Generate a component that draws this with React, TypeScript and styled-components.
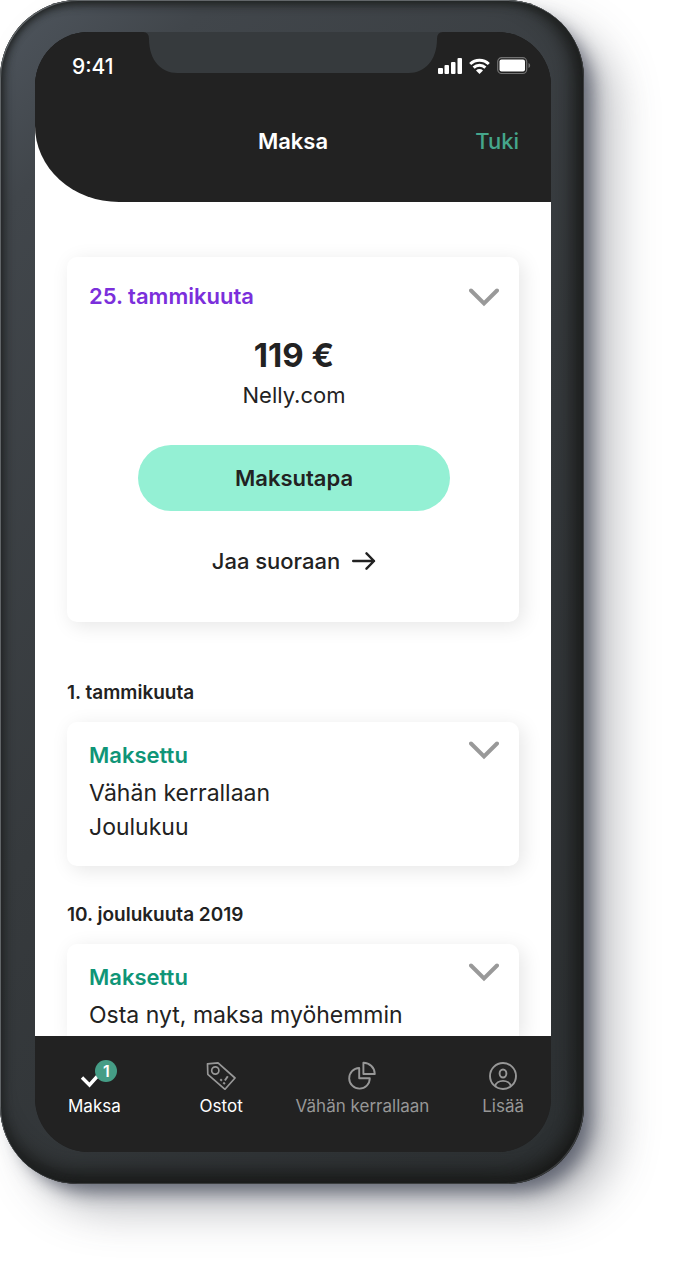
import React from "react";
import styled, { createGlobalStyle } from "styled-components";

const GlobalStyle = createGlobalStyle`
  *, *::before, *::after { box-sizing: border-box; }
  html { background: #fff; }
  body {
    margin: 0;
    background: #fff;
    color: #222;
    font-family: Inter, "Liberation Sans", sans-serif;
    font-size: 22px;
    -webkit-font-smoothing: antialiased;
  }
  h1, h2, p { margin: 0; }
  button { font: inherit; color: inherit; border: 0; background: none; padding: 0; cursor: pointer; }
`;

const Page = styled.div`
  padding: 0 96px 88px 0;
  overflow: hidden;
`;

const Phone = styled.div`
  padding: 32px 33px 32px 35px;
  border-radius: 78px;
  background: linear-gradient(135deg, #4f565e 0, #41464b 12%, #363a3d 50%, #2c3032 100%);
  box-shadow:
    inset 1px 1px 0 #626669,
    inset -1px -1px 0 #3a3c3e,
    inset 5px 0 8px -2px #212425,
    inset 0 6px 8px -2px #222524,
    inset -18px 0 20px -8px #1a1b1a,
    inset 0 -20px 20px -8px #1a1b1a,
    12px 12px 18px -4px rgba(68, 74, 90, 0.75),
    30px 26px 44px 0 rgba(68, 72, 82, 0.36);
`;

const Screen = styled.div`
  position: relative;
  overflow: hidden;
  border-radius: 54px;
  background: #222;
`;

const HeaderBackdrop = styled.div`
  background: linear-gradient(#222 50%, #fff 50%);
`;

const Header = styled.header`
  background: #222;
  border-bottom-left-radius: 84px 76px;
  color: #fff;
  padding: 20px 32px 0;
  height: 170px;
`;

const Notch = styled.svg`
  position: absolute;
  top: 0;
  left: 50%;
  margin-left: -150px;
  width: 300px;
  height: 41px;
`;

const StatusBar = styled.div`
  display: flex;
  align-items: center;
  justify-content: space-between;
  height: 28px;
  margin: 0 -12px 0 5px;
  font-size: 21px;
  font-weight: 500;
`;

const TitleBar = styled.div`
  display: grid;
  grid-template-columns: 1fr auto 1fr;
  align-items: center;
  margin-top: 47px;
  line-height: 28px;
`;

const Title = styled.h1`
  grid-column: 2;
  font-size: 22px;
  font-weight: 600;
`;

const SupportLink = styled.a`
  justify-self: end;
  color: #45a68c;
  font-weight: 500;
  text-decoration: none;
`;

const Main = styled.main`
  padding: 55px 32px 0;
  background: #fff;
`;

const Card = styled.section<{ $kind?: "open" | "cut" }>`
  padding: ${(p) => (p.$kind === "open" ? "24px 20px 22px 22px" : p.$kind === "cut" ? "18px 20px 4px 22px" : "18px 20px 22px 22px")};
  border-radius: ${(p) => (p.$kind === "cut" ? "10px 10px 0 0" : "10px")};
  background: #fff;
  box-shadow: 4px 4px 20px rgba(0, 0, 0, 0.1);
`;

const CardTop = styled.div`
  display: flex;
  justify-content: space-between;
  align-items: flex-start;
  line-height: 30px;
`;

const Status = styled.h2<{ $tone: "due" | "paid" }>`
  font-size: 22px;
  font-weight: 600;
  color: ${(p) => (p.$tone === "due" ? "#7b2fdb" : "#0f9577")};
`;

const Toggle = styled.button<{ $compact?: boolean }>`
  display: flex;
  height: ${(p) => (p.$compact ? "20px" : "32px")};
  align-items: center;
`;

const Summary = styled.div`
  display: flex;
  flex-direction: column;
  align-items: center;
  padding: 20px 0 21px;
`;

const Amount = styled.p`
  font-size: 33px;
  font-weight: 700;
  line-height: 44px;
`;

const Store = styled.p`
  line-height: 36px;
`;

const PayButton = styled.button`
  && {
    width: 76%;
    height: 66px;
    margin-top: 32px;
    border-radius: 33px;
    background: #94f0d4;
    font-weight: 600;
  }
`;

const ShareButton = styled.button`
  && {
    display: flex;
    align-items: center;
    gap: 12px;
    height: 36px;
    margin-top: 32px;
    font-weight: 500;
  }
`;

const DateHeading = styled.h2<{ $first?: boolean }>`
  margin: ${(p) => (p.$first ? "56px" : "34px")} 0 14px;
  font-size: 19px;
  font-weight: 600;
  line-height: 30px;
`;

const Detail = styled.p`
  font-size: 23px;
  line-height: 34px;
`;

const Details = styled.div`
  padding-top: 6px;
`;

const Nav = styled.nav`
  display: flex;
  justify-content: space-between;
  height: 116px;
  padding: 24px 27px 0 33px;
  background: #222;
`;

const Tab = styled.a<{ $lit?: boolean }>`
  display: flex;
  flex-direction: column;
  align-items: center;
  color: ${(p) => (p.$lit ? "#fff" : "#979797")};
  font-size: 17px;
  line-height: 24px;
  text-decoration: none;

  &:first-child {
    margin-right: 26px;
  }
`;

const IconBox = styled.span`
  position: relative;
  display: flex;
  width: 32px;
  height: 34px;
  justify-content: center;
`;

const Badge = styled.span`
  position: absolute;
  top: 0;
  right: -7px;
  width: 22px;
  height: 22px;
  border-radius: 50%;
  background: #459d86;
  color: #fff;
  font-size: 16px;
  font-weight: 600;
  line-height: 22px;
  text-align: center;
`;

const StatusIcons = () => (
  <svg width="93" height="18" viewBox="0 0 93 18" fill="#fff" aria-hidden="true">
    <rect x="0" y="11" width="5" height="6" rx="1" />
    <rect x="6.500" y="8" width="4.500" height="9" rx="1" />
    <rect x="13" y="5" width="4.500" height="12" rx="1" />
    <rect x="19.500" y="1" width="4.500" height="16" rx="1" />
    <g fill="none" stroke="#fff" strokeWidth="2.900">
      <path d="M32.200 7a13.400 13.400 0 0 1 18.600 0" />
      <path d="M35.600 10.600a8.500 8.500 0 0 1 11.800 0" />
    </g>
    <path d="M38 13.400a5 5 0 0 1 7 0L41.500 17z" />
    <rect x="59.700" y="0.700" width="29" height="15.800" rx="4" fill="none" stroke="#737373" strokeWidth="1.200" />
    <rect x="61.500" y="2.500" width="25.500" height="12" rx="2" />
    <path d="M90.500 6v5c2.200-1 2.200-4 0-5z" fill="#737373" />
  </svg>
);

const Chevron = () => (
  <svg width="30" height="20" viewBox="0 0 30 20" fill="none" stroke="#999" strokeWidth="4" strokeLinecap="round" aria-hidden="true">
    <path d="M2 3.500l13 13 13-13" />
  </svg>
);

const Arrow = () => (
  <svg width="24" height="18" viewBox="0 0 24 18" fill="none" stroke="#222" strokeWidth="2.400" strokeLinecap="round" strokeLinejoin="round" aria-hidden="true">
    <path d="M1.200 9H22M14.500 1.300L22 9l-7.500 7.700" />
  </svg>
);

const CheckIcon = () => (
  <svg width="32" height="30" viewBox="0 0 32 30" fill="none" stroke="#fff" strokeWidth="3.400" aria-hidden="true">
    <path d="M4 17.500l7.500 7.500L20 15.500" />
  </svg>
);

const TagIcon = () => (
  <svg width="30" height="30" viewBox="0 0 30 30" fill="none" stroke="#979797" strokeWidth="1.700" strokeLinejoin="round" aria-hidden="true">
    <path d="M1.500 3.800L12 2.800 29 18 19 29.300 1.800 14.300z" />
    <circle cx="9.300" cy="10.500" r="3.600" />
    <path d="M21.800 16.300l-2.900 4.200" strokeWidth="2" />
    <path d="M14.300 19.200l1.600 1.500M17.300 22.400l1.600 1.500" strokeWidth="2" />
  </svg>
);

const PieIcon = () => (
  <svg width="30" height="30" viewBox="0 0 30 30" fill="none" stroke="#979797" strokeWidth="1.900" strokeLinejoin="round" aria-hidden="true">
    <path d="M12.200 8A10.300 10.300 0 1 0 22.800 18.300H12.200z" />
    <path d="M16.400 2.800V14h11.400A11.300 11.300 0 0 0 16.400 2.800z" />
  </svg>
);

const UserIcon = () => (
  <svg width="30" height="30" viewBox="0 0 30 30" fill="none" stroke="#979797" strokeWidth="1.900" aria-hidden="true">
    <circle cx="15" cy="16" r="13" />
    <ellipse cx="15" cy="13.500" rx="3.400" ry="4" />
    <path d="M7.200 26.300C8.200 19 21.800 19 22.800 26.300" />
  </svg>
);

export default function App() {
  return (
    <>
      <GlobalStyle />
      <Page>
        <Phone>
          <Screen>
            <HeaderBackdrop>
              <Header>
                <Notch viewBox="0 0 300 41" aria-hidden="true">
                  <path d="M0 0Q6 0 6 7C6 29 19 41 34 41H266C281 41 294 29 294 7Q294 0 300 0z" fill="#363a3d" />
                </Notch>
                <StatusBar>
                  <span>9:41</span>
                  <StatusIcons />
                </StatusBar>
                <TitleBar>
                  <Title>Maksa</Title>
                  <SupportLink href="#tuki">Tuki</SupportLink>
                </TitleBar>
              </Header>
            </HeaderBackdrop>
            <Main>
              <Card $kind="open">
                <CardTop>
                  <Status $tone="due">25. tammikuuta</Status>
                  <Toggle aria-label="Näytä tiedot"><Chevron /></Toggle>
                </CardTop>
                <Summary>
                  <Amount>119 €</Amount>
                  <Store>Nelly.com</Store>
                  <PayButton>Maksutapa</PayButton>
                  <ShareButton>Jaa suoraan <Arrow /></ShareButton>
                </Summary>
              </Card>
              <DateHeading $first>1. tammikuuta</DateHeading>
              <Card>
                <CardTop>
                  <Status $tone="paid">Maksettu</Status>
                  <Toggle $compact aria-label="Näytä tiedot"><Chevron /></Toggle>
                </CardTop>
                <Details>
                  <Detail>Vähän kerrallaan</Detail>
                  <Detail>Joulukuu</Detail>
                </Details>
              </Card>
              <DateHeading>10. joulukuuta 2019</DateHeading>
              <Card $kind="cut">
                <CardTop>
                  <Status $tone="paid">Maksettu</Status>
                  <Toggle $compact aria-label="Näytä tiedot"><Chevron /></Toggle>
                </CardTop>
                <Details>
                  <Detail>Osta nyt, maksa myöhemmin</Detail>
                </Details>
              </Card>
            </Main>
            <Nav>
              <Tab href="#maksa" $lit>
                <IconBox><CheckIcon /><Badge>1</Badge></IconBox>
                Maksa
              </Tab>
              <Tab href="#ostot" $lit>
                <IconBox><TagIcon /></IconBox>
                Ostot
              </Tab>
              <Tab href="#vahan-kerrallaan">
                <IconBox><PieIcon /></IconBox>
                Vähän kerrallaan
              </Tab>
              <Tab href="#lisaa">
                <IconBox><UserIcon /></IconBox>
                Lisää
              </Tab>
            </Nav>
          </Screen>
        </Phone>
      </Page>
    </>
  );
}
